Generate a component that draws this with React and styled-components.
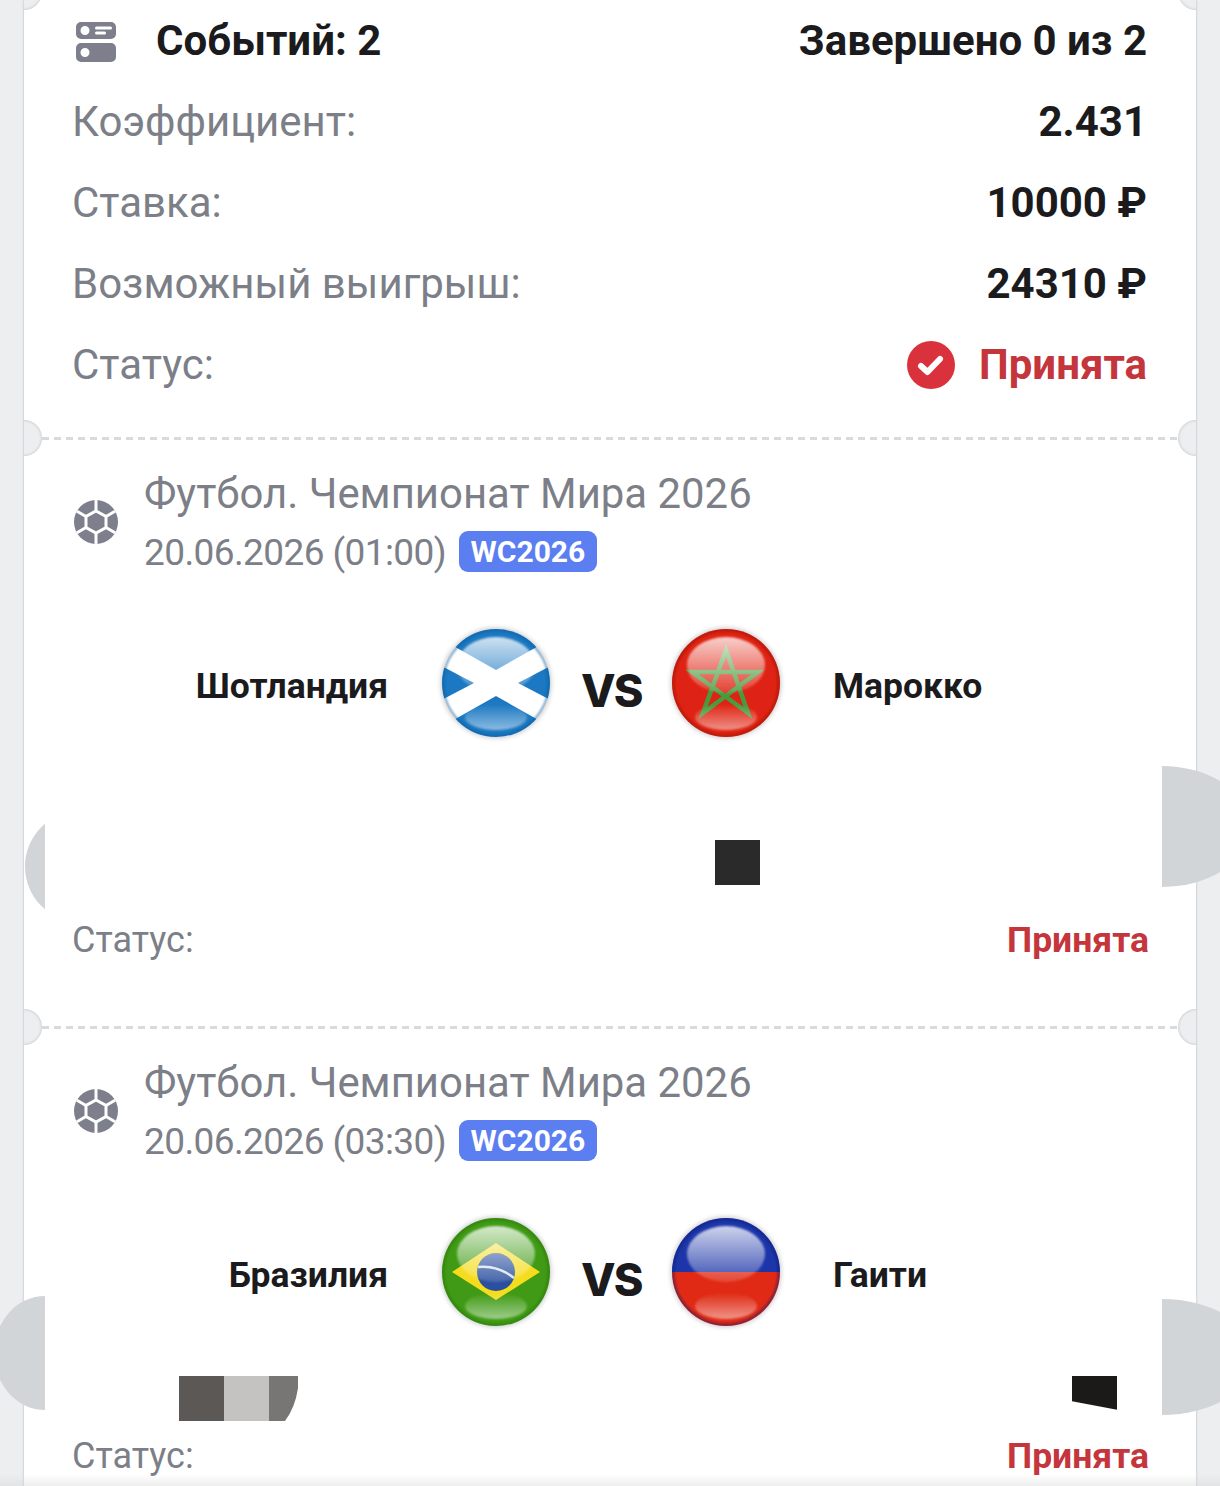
import styled, { createGlobalStyle } from "styled-components";

const GlobalStyle = createGlobalStyle`
  html, body { margin: 0; padding: 0; background: #eceef0; }
  body { font-family: Roboto, "Liberation Sans", sans-serif; }
`;

const Page = styled.div`
  position: relative;
  width: 1220px;
  height: 1486px;
  overflow: hidden;
  padding: 0 24px;
  box-sizing: border-box;
  background: #eceef0;
`;

const Ticket = styled.div`
  position: relative;
  background: #fff;
  box-shadow: 0 0 2px rgba(120, 125, 130, 0.55);
`;

const Section = styled.section`
  position: relative;
  box-sizing: border-box;
  height: ${(p) => p.$height}px;
  padding: ${(p) => p.$top || 0}px 49px 0;
`;

const Dashes = styled.span`
  position: absolute;
  top: -1px;
  left: 18px;
  right: 18px;
  height: 3px;
  background: repeating-linear-gradient(to right, #d8dadd 0 7px, transparent 7px 12px);
`;

const Notch = styled.span`
  position: absolute;
  top: ${(p) => p.$top}px;
  ${(p) => p.$side}: -18px;
  width: 36px;
  height: 36px;
  border-radius: 50%;
  background: #eceef0;
  box-shadow: inset 0 0 3px rgba(120, 125, 130, 0.45);
  clip-path: ${(p) => (p.$side === "left" ? "inset(0 0 0 18px)" : "inset(0 18px 0 0)")};
  margin-top: -18px;
`;

const Row = styled.div`
  display: flex;
  align-items: center;
  justify-content: space-between;
  height: 81px;
`;

const Label = styled.span`
  font-size: 42px;
  color: #7c7f88;
  margin-left: -1px;
`;

const Value = styled.span`
  font-size: 42px;
  font-weight: 700;
  color: #1b1b1d;
`;

const CountGroup = styled.span`
  display: flex;
  align-items: center;
  gap: 40px;
  padding-left: 3px;
`;

const StatusGroup = styled.span`
  display: flex;
  align-items: center;
  gap: 24px;
`;

const Accepted = styled.span`
  font-size: ${(p) => p.$size}px;
  font-weight: 700;
  color: #c4353c;
  margin-right: ${(p) => p.$shift || 0}px;
`;

const EventHead = styled.div`
  display: flex;
  align-items: center;
  gap: 26px;
  padding-left: 1px;
`;

const HeadText = styled.div`
  display: flex;
  flex-direction: column;
`;

const League = styled.div`
  font-size: 41.900px;
  line-height: 58px;
  color: #7c7f88;
`;

const DateLine = styled.div`
  display: flex;
  align-items: center;
  gap: 13px;
  box-sizing: border-box;
  height: 57px;
  padding-top: 2px;
  font-size: 37px;
  letter-spacing: -0.6px;
  color: #7c7f88;
`;

const Badge = styled.span`
  display: inline-flex;
  align-items: center;
  justify-content: center;
  width: 138px;
  height: 41px;
  margin-top: -2px;
  border-radius: 9px;
  background: #5b7ef0;
  color: #fff;
  font-size: 30px;
  font-weight: 700;
  letter-spacing: 0;
`;

const Match = styled.div`
  display: grid;
  grid-template-columns: 370px 108px 122px 108px 1fr;
  align-items: center;
  margin-top: 48px;
  height: 110px;
  margin-left: -1px;
`;

const Team = styled.div`
  font-size: 35.500px;
  font-weight: 700;
  color: #1b1b1d;
  text-align: ${(p) => (p.$right ? "left" : "right")};
  padding: 6px ${(p) => (p.$right ? "0" : "54px")} 0 ${(p) => (p.$right ? "53px" : "0")};
`;

const Versus = styled.div`
  font-family: Inter, Roboto, sans-serif;
  font-size: 45px;
  font-weight: 800;
  letter-spacing: -2px;
  color: #1b1b1d;
  padding: 14px 0 0 31px;
`;

const FlagSvg = styled.svg`
  display: block;
  width: 120px;
  height: 120px;
  margin: -5px -6px;
`;

const Strip = styled.div`
  display: flex;
  justify-content: space-between;
  height: 45px;
  margin-top: ${(p) => p.$gap}px;
  padding: 0 ${(p) => p.$right}px 0 ${(p) => p.$left}px;
`;

const Chunks = styled.div`
  display: flex;
`;

const Chunk = styled.span`
  display: block;
  width: 45px;
  height: 45px;
  background: ${(p) => p.$color};
  clip-path: ${(p) => p.$clip || "none"};
`;

const StatusRow = styled.div`
  display: flex;
  align-items: center;
  justify-content: space-between;
  height: 56px;
  margin-top: ${(p) => p.$gap}px;
`;

const StatusLabel = styled.span`
  font-size: 36px;
  color: #7c7f88;
  margin-left: -1px;
`;

const Blob = styled.span`
  position: absolute;
  top: ${(p) => p.$top}px;
  left: ${(p) => p.$left}px;
  width: ${(p) => p.$w}px;
  height: ${(p) => p.$h}px;
  background: #d1d5d7;
  clip-path: ${(p) => p.$clip};
`;

const BottomFade = styled.div`
  position: absolute;
  left: 0;
  right: 0;
  bottom: 0;
  height: 12px;
  background: linear-gradient(to bottom, rgba(210, 212, 214, 0), rgba(210, 212, 214, 0.4));
`;

const Icon = styled.svg`
  display: block;
  flex: none;
  margin-top: ${(p) => p.$shift || 0}px;
`;

const ListIcon = () => (
  <Icon width="40" height="40" viewBox="0 0 40 40" $shift={3}>
    <path
      fill="#7d808c"
      fillRule="evenodd"
      d="M5 0h30a5 5 0 0 1 5 5v7a5 5 0 0 1-5 5H5a5 5 0 0 1-5-5V5a5 5 0 0 1 5-5zm-.500 8.500a4.500 4.500 0 1 0 9 0 4.500 4.500 0 0 0-9 0zM20.500 4.500a1.500 1.500 0 0 0 0 3h14a1.500 1.500 0 0 0 0-3zM20.500 9.500a1.500 1.500 0 0 0 0 3h8a1.500 1.500 0 0 0 0-3z"
    />
    <path
      fill="#7d808c"
      fillRule="evenodd"
      d="M5 21h30a5 5 0 0 1 5 5v9a5 5 0 0 1-5 5H5a5 5 0 0 1-5-5v-9a5 5 0 0 1 5-5zm-.500 9.500a4.500 4.500 0 1 0 9 0 4.500 4.500 0 0 0-9 0z"
    />
  </Icon>
);

const BallIcon = () => (
  <Icon width="44" height="44" viewBox="0 0 44 44" $shift={-2}>
    <defs>
      <clipPath id="ball">
        <circle cx="22" cy="22" r="22" />
      </clipPath>
    </defs>
    <g clipPath="url(#ball)">
      <rect width="44" height="44" fill="#7d808c" />
      <g stroke="#fff" strokeWidth="3" fill="none">
        <polygon points="22,11 32,16.500 32,27.500 22,33 12,27.500 12,16.500" />
        <path d="M22 11V-2M32 16.500L44 9.500M32 27.500L44 34.500M22 33V46M12 27.500L0 34.500M12 16.500L0 9.500" />
      </g>
    </g>
  </Icon>
);

const CheckIcon = () => (
  <Icon width="48" height="48" viewBox="0 0 48 48">
    <circle cx="24" cy="24" r="24" fill="#d9323c" />
    <path d="M14 25l6.500 6L33 18" fill="none" stroke="#fff" strokeWidth="6" strokeLinecap="round" strokeLinejoin="round" />
  </Icon>
);

const Flag = ({ id, rim, children }) => (
  <FlagSvg viewBox="0 0 120 120">
    <defs>
      <clipPath id={`${id}-clip`}>
        <circle cx="60" cy="60" r="54" />
      </clipPath>
      <linearGradient id={`${id}-top`} x1="0" y1="0" x2="0" y2="1">
        <stop offset="0" stopColor="#fff" stopOpacity="0.78" />
        <stop offset="1" stopColor="#fff" stopOpacity="0.14" />
      </linearGradient>
      <linearGradient id={`${id}-bottom`} x1="0" y1="0" x2="0" y2="1">
        <stop offset="0" stopColor="#fff" stopOpacity="0" />
        <stop offset="1" stopColor="#fff" stopOpacity="0.5" />
      </linearGradient>
      <filter id={`${id}-halo`} x="-20%" y="-20%" width="140%" height="140%">
        <feGaussianBlur stdDeviation="2.500" />
      </filter>
      <filter id={`${id}-soft`} x="-20%" y="-20%" width="140%" height="140%">
        <feGaussianBlur stdDeviation="1.200" />
      </filter>
      <filter id={`${id}-art`} x="-5%" y="-5%" width="110%" height="110%">
        <feGaussianBlur stdDeviation="0.500" />
      </filter>
    </defs>
    <circle cx="60" cy="60" r="55" fill="#000" opacity="0.22" filter={`url(#${id}-halo)`} />
    <g filter={`url(#${id}-art)`}>
      <g clipPath={`url(#${id}-clip)`}>
        {children}
        <circle cx="60" cy="60" r="53" fill="none" stroke={rim} strokeWidth="2.500" opacity="0.55" filter={`url(#${id}-soft)`} />
        <ellipse cx="60" cy="42" rx="39" ry="28" fill={`url(#${id}-top)`} filter={`url(#${id}-soft)`} />
        <ellipse cx="60" cy="94" rx="31" ry="13" fill={`url(#${id}-bottom)`} filter={`url(#${id}-soft)`} />
      </g>
    </g>
  </FlagSvg>
);

const Scotland = () => (
  <Flag id="sco" rim="#0c5a98">
    <rect width="120" height="120" fill="#fff" />
    <g fill="#1a78c2">
      <polygon points="60,47 120,13 120,0 0,0 0,13" />
      <polygon points="38,60 0,40 0,80" />
      <polygon points="82,60 120,40 120,80" />
      <polygon points="60,73 0,107 0,120 120,120 120,107" />
    </g>
  </Flag>
);

const Morocco = () => (
  <Flag id="mar" rim="#8e1410">
    <rect width="120" height="120" fill="#df2312" />
    <polygon
      points="60,27 82,90 26,49 92,49 37,90"
      fill="none"
      stroke="#4a9a3c"
      strokeWidth="4.500"
      strokeLinejoin="miter"
    />
  </Flag>
);

const Brazil = () => (
  <Flag id="bra" rim="#2c7408">
    <rect width="120" height="120" fill="#3f9a14" />
    <polygon points="60,31 104,60 60,88 16,60" fill="#f5dc1e" />
    <circle cx="60" cy="60" r="19" fill="#2a4f9f" />
    <path d="M42 55q20-2 36 11" fill="none" stroke="#d8e2ee" strokeWidth="2.500" />
  </Flag>
);

const Haiti = () => (
  <Flag id="hai" rim="#0d1f78">
    <rect width="120" height="60" fill="#1c35a8" />
    <rect y="60" width="120" height="60" fill="#e02a14" />
  </Flag>
);

const events = [
  {
    time: "20.06.2026 (01:00)",
    home: "Шотландия",
    away: "Марокко",
    HomeFlag: Scotland,
    AwayFlag: Morocco,
    height: 589,
    stripGap: 102,
    statusGap: 27,
    strip: { left: 642, right: 387, groups: [[{ color: "#2a2a2b" }]] },
  },
  {
    time: "20.06.2026 (03:30)",
    home: "Бразилия",
    away: "Гаити",
    HomeFlag: Brazil,
    AwayFlag: Haiti,
    height: 470,
    stripGap: 49,
    statusGap: 7,
    strip: {
      left: 106,
      right: 30,
      groups: [
        [
          { color: "#5c5856" },
          { color: "#c4c3c1" },
          { color: "#777674", clip: "path('M0 0H29V12Q26 32 16 45H0Z')" },
        ],
        [{ color: "#1c1a19", clip: "polygon(0 0, 100% 0, 100% 75%, 0 56%)" }],
      ],
    },
  },
];

const EventCard = ({ event }) => {
  const { HomeFlag, AwayFlag, strip } = event;
  return (
    <Section $height={event.height} $top={27}>
      <Dashes />
      <EventHead>
        <BallIcon />
        <HeadText>
          <League>Футбол. Чемпионат Мира 2026</League>
          <DateLine>
            {event.time}
            <Badge>WC2026</Badge>
          </DateLine>
        </HeadText>
      </EventHead>
      <Match>
        <Team>{event.home}</Team>
        <HomeFlag />
        <Versus>VS</Versus>
        <AwayFlag />
        <Team $right>{event.away}</Team>
      </Match>
      <Strip $gap={event.stripGap} $left={strip.left} $right={strip.right}>
        {strip.groups.map((group, i) => (
          <Chunks key={i}>
            {group.map((chunk, j) => (
              <Chunk key={j} $color={chunk.color} $clip={chunk.clip} />
            ))}
          </Chunks>
        ))}
      </Strip>
      <StatusRow $gap={event.statusGap}>
        <StatusLabel>Статус:</StatusLabel>
        <Accepted $size={35.5} $shift={-2}>Принята</Accepted>
      </StatusRow>
    </Section>
  );
};

export default function App() {
  return (
    <Page>
      <GlobalStyle />
      <Ticket>
        <Notch $side="left" $top={-8} />
        <Notch $side="right" $top={-8} />
        <Notch $side="left" $top={438} />
        <Notch $side="right" $top={438} />
        <Notch $side="left" $top={1027} />
        <Notch $side="right" $top={1027} />
        <Section $height={438}>
          <Row>
            <CountGroup>
              <ListIcon />
              <Value>Событий: 2</Value>
            </CountGroup>
            <Value>Завершено 0 из 2</Value>
          </Row>
          <Row>
            <Label>Коэффициент:</Label>
            <Value>2.431</Value>
          </Row>
          <Row>
            <Label>Ставка:</Label>
            <Value>10000 ₽</Value>
          </Row>
          <Row>
            <Label>Возможный выигрыш:</Label>
            <Value>24310 ₽</Value>
          </Row>
          <Row>
            <Label>Статус:</Label>
            <StatusGroup>
              <CheckIcon />
              <Accepted $size={42}>Принята</Accepted>
            </StatusGroup>
          </Row>
        </Section>
        {events.map((event) => (
          <EventCard key={event.time} event={event} />
        ))}
      </Ticket>
      <Blob $left={25} $top={823} $w={20} $h={87} $clip="circle(56px at 56px 43.500px)" />
      <Blob $left={1162} $top={766} $w={58} $h={121} $clip="ellipse(88px 60.500px at 0 60.500px)" />
      <Blob $left={0} $top={1296} $w={45} $h={114} $clip="ellipse(51px 57px at 45px 57px)" />
      <Blob $left={1162} $top={1299} $w={58} $h={116} $clip="ellipse(92px 58px at 0 58px)" />
      <BottomFade />
    </Page>
  );
}
